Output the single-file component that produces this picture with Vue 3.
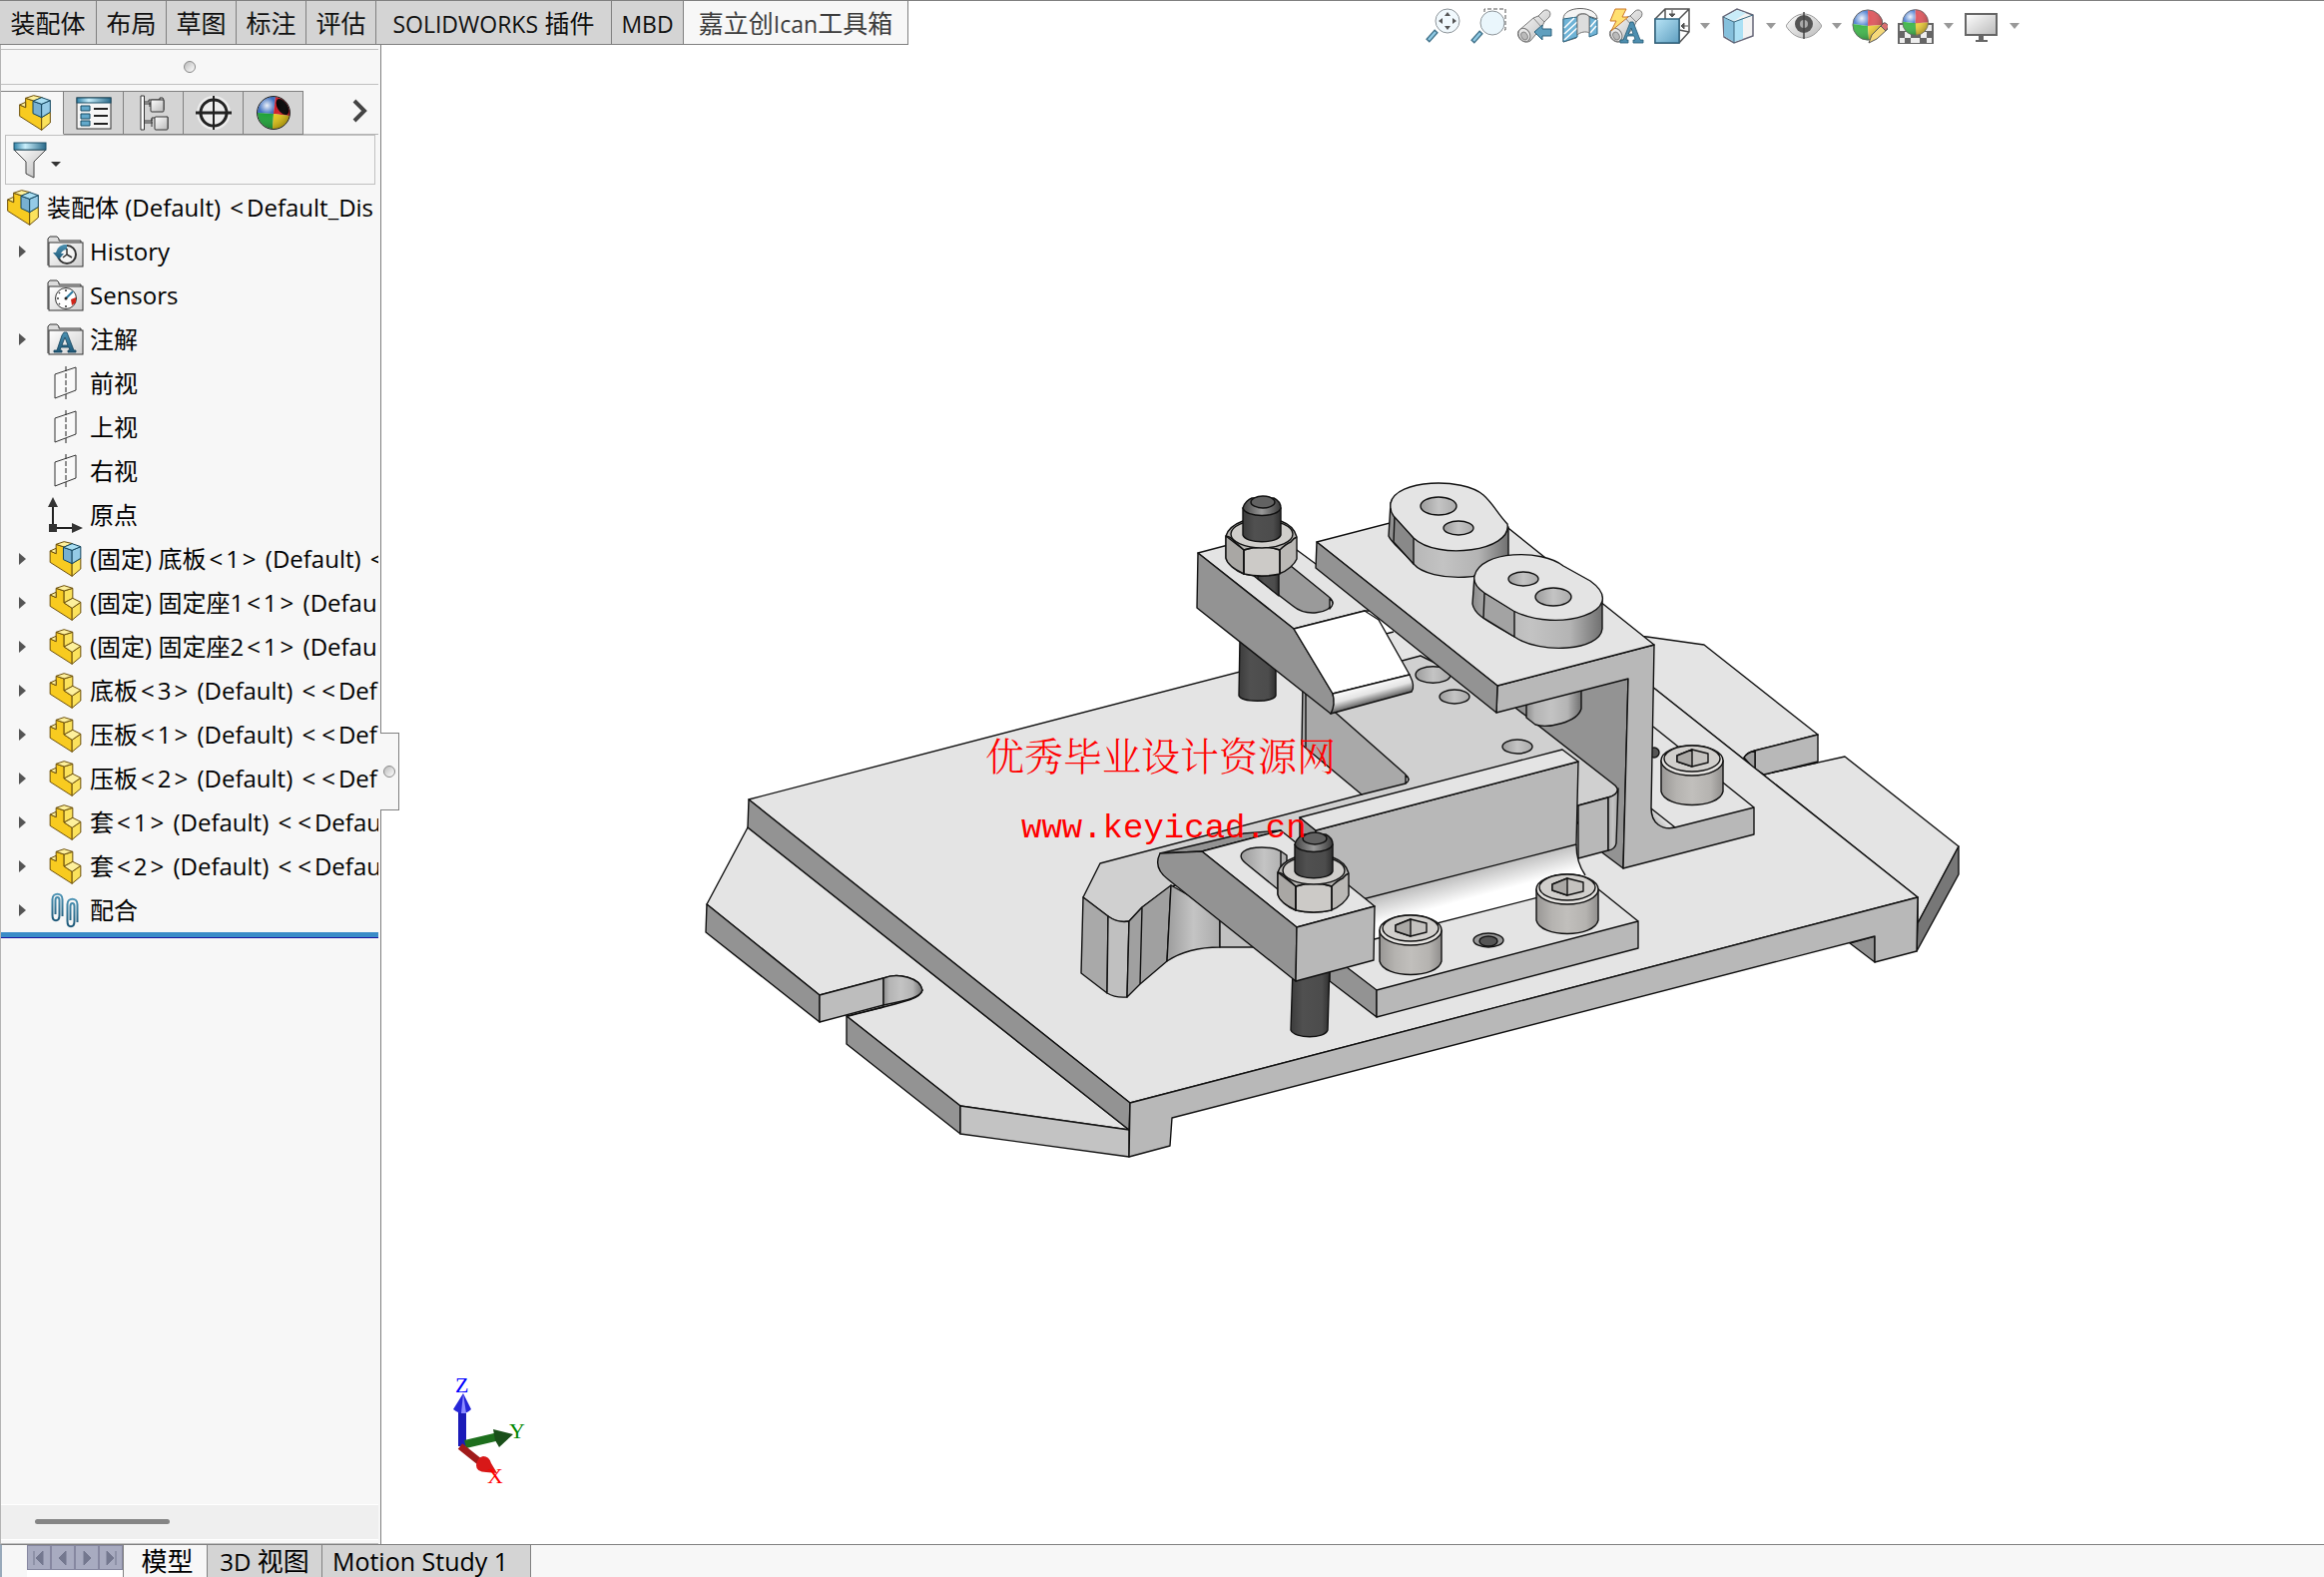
<script setup>
import { ref } from 'vue'

const commandTabs = [
  { cjk: '装配体', width: 96 },
  { cjk: '布局', width: 69 },
  { cjk: '草图', width: 69 },
  { cjk: '标注', width: 69 },
  { cjk: '评估', width: 69 },
  { latin: 'SOLIDWORKS', cjk: ' 插件', width: 235 },
  { latin: 'MBD', width: 71 },
  { lead: '嘉立创', latin: 'Ican', cjk: '工具箱', width: 224, active: true },
]

const viewTools = [
  { id: 'zoom-fit', label: 'Zoom to fit' },
  { id: 'zoom-area', label: 'Zoom to area' },
  { id: 'previous', label: 'Previous view' },
  { id: 'section', label: 'Section view' },
  { id: 'dynamic', label: 'Dynamic annotation' },
  { id: 'orient', label: 'View orientation', menu: true },
  { id: 'style', label: 'Display style', menu: true },
  { id: 'eye', label: 'Hide or show items', menu: true },
  { id: 'appearance', label: 'Edit appearance' },
  { id: 'scene', label: 'Apply scene', menu: true },
  { id: 'monitor', label: 'View settings', menu: true },
]

const panelTabs = [
  { id: 'assembly', label: 'Feature tree', active: true },
  { id: 'props', label: 'Properties' },
  { id: 'config', label: 'Configurations' },
  { id: 'target', label: 'Dimensions' },
  { id: 'ball', label: 'Display' },
]

const rootName = '装配体 (Default) <Default_Dis'

const tree = [
  { icon: 'history', text: 'History', open: true },
  { icon: 'sensor', text: 'Sensors' },
  { icon: 'note', text: '注解', open: true },
  { icon: 'plane', text: '前视' },
  { icon: 'plane', text: '上视' },
  { icon: 'plane', text: '右视' },
  { icon: 'origin', text: '原点' },
  { icon: 'assembly', text: '(固定) 底板<1> (Default) <', open: true },
  { icon: 'part', text: '(固定) 固定座1<1> (Defau', open: true },
  { icon: 'part', text: '(固定) 固定座2<1> (Defau', open: true },
  { icon: 'part', text: '底板<3> (Default) <<Def', open: true },
  { icon: 'part', text: '压板<1> (Default) <<Def', open: true },
  { icon: 'part', text: '压板<2> (Default) <<Def', open: true },
  { icon: 'part', text: '套<1> (Default) <<Defau', open: true },
  { icon: 'part', text: '套<2> (Default) <<Defau', open: true },
  { icon: 'mates', text: '配合', open: true },
]

// Angle brackets get their own span so they can carry side padding.
const pieces = (text) => text.split(/([<>])/).filter(Boolean)
const isAngle = (piece) => piece === '<' || piece === '>'

const screws = [
  [1695, 760],
  [1570, 889],
  [1413, 930],
]

const filter = ref('')
</script>

<template>
  <div class="app">
    <svg class="defs" aria-hidden="true">
      <defs>
        <linearGradient id="gBlue" x1="0" y1="0" x2="1" y2="1"><stop offset="0" stop-color="#b8e4f6" /><stop offset="1" stop-color="#5f9fc0" /></linearGradient>
        <linearGradient id="gSteel" x1="0" y1="0" x2="0" y2="1"><stop offset="0" stop-color="#4c93b4" /><stop offset="1" stop-color="#1d5878" /></linearGradient>
        <linearGradient id="gFunnel" x1="0" x2="1"><stop offset="0" stop-color="#2f82a8" /><stop offset=".35" stop-color="#c9effc" /><stop offset="1" stop-color="#2a6a8a" /></linearGradient>
        <linearGradient id="gFolder" x1="0" y1="0" x2="1" y2="1"><stop offset="0" stop-color="#fff" /><stop offset="1" stop-color="#cfcfcf" /></linearGradient>
        <radialGradient id="gShine" cx=".3" cy=".28" r=".75"><stop offset="0" stop-color="#fff" stop-opacity=".9" /><stop offset=".35" stop-color="#fff" stop-opacity="0" /><stop offset="1" stop-color="#000" stop-opacity=".25" /></radialGradient>
        <linearGradient id="gGrey" x1="0" y1="0" x2="1" y2="1"><stop offset="0" stop-color="#fff" /><stop offset="1" stop-color="#b9b9b9" /></linearGradient>

        <symbol id="i-part" viewBox="-2 -2 96 108">
          <g stroke="#6b4e08" stroke-width="3" stroke-linejoin="round">
            <path fill="#f8cb20" d="M0 28V62L66 104V68L42 52V16L18 8V36Z" />
            <path fill="#fbe25c" d="M66 68 92 50V82L66 104ZM42 16 68 8V38L42 52Z" />
            <path fill="#fdf09c" d="M18 8 42 0 68 8 42 16ZM42 52 68 38 92 50 66 68ZM0 28 18 20V36Z" />
          </g>
        </symbol>
        <symbol id="i-assembly" viewBox="-2 -2 96 108">
          <g stroke="#6b4e08" stroke-width="3" stroke-linejoin="round">
            <path fill="#f8cb20" d="M0 28V62L66 104V66L42 52V16L18 8V36Z" />
            <path fill="#fbe25c" d="M66 66 92 50V82L66 104Z" />
            <path fill="#fdf09c" d="M18 8 42 0 68 6 42 16ZM0 28 18 20V36Z" />
          </g>
          <g stroke="#12455e" stroke-width="3" stroke-linejoin="round">
            <path fill="#78b0d0" d="M40 17 66 26V66L40 54Z" />
            <path fill="#95cbe6" d="M66 26 92 15V50L66 66Z" />
            <path fill="#a9def2" d="M40 17 66 6 92 15 66 26Z" />
          </g>
        </symbol>
        <symbol id="i-props" viewBox="0 0 36 34">
          <rect x="1" y="2" width="34" height="31" fill="#f6f6f6" stroke="#333" />
          <rect x="1" y="2" width="34" height="5" fill="url(#gFunnel)" stroke="#174a63" />
          <path fill="#63a9cb" stroke="#174a63" d="M5 10H14V15H5ZM5 18H14V23H5ZM5 25H14V30H5Z" />
          <path stroke="#222" stroke-width="2" d="M18 13H32M18 20H32M18 28H32" />
        </symbol>
        <symbol id="i-config" viewBox="0 0 36 36">
          <path fill="#fff" stroke="#333" d="M5 1H8.500V35H5Z" />
          <path fill="none" stroke="#333" d="M9 7H13V5H24V3H27L28 5V15M9 9H15M9 26H16V23H28L32 22V34M9 28H17M14 7V12M16 24V32" />
          <rect x="15" y="5" width="13" height="12" rx="1" fill="url(#gGrey)" stroke="#333" />
          <rect x="19" y="22" width="13" height="13" rx="1" fill="url(#gGrey)" stroke="#333" />
        </symbol>
        <symbol id="i-target" viewBox="0 0 36 36">
          <circle cx="18" cy="18" r="17" fill="#fff" opacity=".55" />
          <circle cx="18" cy="18" r="13" fill="none" stroke="#222" stroke-width="3" />
          <path stroke="#222" stroke-width="2" d="M18 1V35" />
          <path stroke="#222" stroke-width="3" d="M0 18H36" />
        </symbol>
        <symbol id="i-ball" viewBox="0 0 36 36">
          <path fill="#3d6fc0" d="M18 19 2 18A16 16 0 0 1 20 2Z" />
          <path fill="#d01c28" d="M20 2A16 16 0 0 1 34 21L18 19Z" />
          <path fill="#1fa238" d="M2 18 18 19 17 34A16 16 0 0 1 2 18Z" />
          <path fill="#e5c818" d="M18 19 34 21A16 16 0 0 1 17 34Z" />
          <ellipse cx="27" cy="12" rx="5" ry="9" transform="rotate(-32 27 12)" fill="#000" />
          <circle cx="18" cy="18" r="16.500" fill="url(#gShine)" stroke="#222" />
        </symbol>
        <symbol id="i-folder" viewBox="0 0 37 32">
          <path fill="#dcdcdc" stroke="#333" d="M1 30V3L3 1H10L12 3V5H34V8" />
          <rect x="2" y="7" width="34" height="24" fill="url(#gFolder)" stroke="#333" />
        </symbol>
        <symbol id="i-history" viewBox="0 0 37 32">
          <use href="#i-folder" width="37" height="32" />
          <circle cx="20" cy="19" r="9" fill="#f5f5f5" stroke="#333" stroke-width="2" />
          <path fill="url(#gSteel)" d="M20 9A10 10 0 0 0 9 17H6L12 24 17 18H14A7 7 0 0 1 20 14Z" />
          <path fill="none" stroke="#333" stroke-width="1.500" d="M20 13V19L25 22M20 19 16 22" />
        </symbol>
        <symbol id="i-sensor" viewBox="0 0 37 32">
          <use href="#i-folder" width="37" height="32" />
          <circle cx="19" cy="19" r="10.500" fill="#fff" stroke="#333" />
          <path stroke="#333" stroke-width="1.500" d="M19 10V12M12 13 13 14M10 19H12M12 25 13 24M19 28V26" />
          <path stroke="#2a79a0" stroke-width="2" d="M19 19 26 12" />
          <circle cx="19" cy="19" r="1.500" fill="#222" />
          <path fill="#cf2418" d="M24 20 29 18V23L25 26Z" />
        </symbol>
        <symbol id="i-note" viewBox="0 0 37 32">
          <use href="#i-folder" width="37" height="32" />
          <path fill="url(#gSteel)" stroke="#123f58" stroke-width=".8" fill-rule="evenodd" d="M17 9H20L27 27H29V29H21V27H23L22 24H14L13 27H15V29H7V27H10L15 12ZM18 14 15 22H21Z" />
        </symbol>
        <symbol id="i-plane" viewBox="0 0 37 36">
          <path fill="#f9f9f9" stroke="#333" d="M8 9 29 2V25L8 33Z" />
          <path fill="none" stroke="#222" stroke-dasharray="5 2" d="M19 1V36" />
        </symbol>
        <symbol id="i-origin" viewBox="0 0 37 36">
          <path stroke="#222" stroke-width="2" d="M6 8V31M6 31H30" />
          <path fill="#333" d="M6 0 11 10H1ZM36 31 25 26V36ZM2 27H10V35H2Z" />
        </symbol>
        <symbol id="i-mates" viewBox="0 0 30 36">
          <g fill="none" stroke="url(#gSteel)" stroke-width="2">
            <path d="M12 24V7C12 0 2 0 2 7V23C2 30 9 30 9 23V8C9 4 5 4 5 8V22" />
            <path d="M27 30V12C27 5 17 5 17 12V29C17 36 24 36 24 29V14C24 10 20 10 20 14V28" />
          </g>
        </symbol>

        <symbol id="i-zoom-fit" viewBox="0 0 36 36">
          <path stroke="#3f7088" stroke-width="5" d="M3 33 12 23" /><path stroke="#8fc9e4" stroke-width="2.500" d="M4 32 11 24" />
          <circle cx="23" cy="13" r="12" fill="#f1f9fd" stroke="#8d9499" />
          <path fill="#555" d="M23 4 26 8H20ZM23 22 26 18H20ZM14 13 18 10V16ZM32 13 28 10V16Z" />
        </symbol>
        <symbol id="i-zoom-area" viewBox="0 0 36 36">
          <path fill="none" stroke="#555" stroke-dasharray="4 2" d="M14 10V1H35V22H28" />
          <path stroke="#3f7088" stroke-width="5" d="M2 34 11 24" /><path stroke="#8fc9e4" stroke-width="2.500" d="M3 33 10 25" />
          <circle cx="22" cy="15" r="12" fill="#eaf6fc" stroke="#8d9499" />
        </symbol>
        <symbol id="i-scope" viewBox="0 0 36 36">
          <path fill="url(#gGrey)" stroke="#777" d="M2 23 17 10 22 8 27 3C31 0 36 4 33 9L28 14 25 20 14 33C8 37 -1 30 2 23Z" />
          <path fill="none" stroke="#888" d="M17 10 25 19M22 8 28 14" />
          <ellipse cx="8" cy="27" rx="5.500" ry="7" transform="rotate(-30 8 27)" fill="#e8e8e8" stroke="#777" />
          <ellipse cx="8" cy="28" rx="3" ry="4" transform="rotate(-30 8 28)" fill="#bbb" stroke="#888" />
        </symbol>
        <symbol id="i-previous" viewBox="0 0 36 36">
          <use href="#i-scope" width="36" height="36" />
          <path fill="#5f9fbe" stroke="#2c617c" d="M18 24 26 17V21H35V28H26V32Z" />
        </symbol>
        <symbol id="i-section" viewBox="0 0 36 36">
          <path fill="#f4f4f4" stroke="#666" d="M1 11C1 -3 35 -3 35 11L26 8C26 5 15 5 15 8L14 30 1 34Z" />
          <path fill="#6fb3d6" stroke="#2e6682" d="M1 11 15 9V29L1 34ZM27 9 35 12V26L27 29Z" />
          <path stroke="#fff" stroke-width="1.500" d="M2 20 12 10M2 26 15 14M2 32 15 20M28 19 34 12M28 25 34 18" />
          <path fill="#ddd" stroke="#777" d="M15 9C17 5 25 5 27 9V25C24 23 18 24 15 27Z" />
        </symbol>
        <symbol id="i-dynamic" viewBox="0 0 36 36">
          <use href="#i-scope" width="36" height="36" />
          <path fill="#ffe070" stroke="#cc7628" d="M7 1H18L14 9H20L3 23 8 13H2Z" />
          <path fill="#4e8fb0" stroke="#245a75" stroke-width=".8" fill-rule="evenodd" d="M22 14H25L32 32H35V35H25V32H27L26 28H19L18 32H20V35H12V32H15L21 17ZM23 20 20 26H25Z" />
        </symbol>
        <symbol id="i-orient" viewBox="0 0 36 36">
          <path fill="#fff" stroke="#555" stroke-width="1.500" d="M1 11 11 1H35V24L25 35H1ZM11 1V11M25 11 35 1M25 35V11M25 22 35 24" />
          <rect x="1" y="11" width="24" height="24" fill="url(#gBlue)" stroke="#2f6480" stroke-width="1.500" />
          <path fill="#555" stroke="#555" d="M18 2V8M15 6H21L18 9ZM34 18H28M30 15V21L27 18Z" />
        </symbol>
        <symbol id="i-style" viewBox="0 0 36 36">
          <path fill="#f3f3f3" stroke="#667" stroke-width="1.500" d="M3 9 17 1 33 7V28L14 35 4 29Z" />
          <path fill="#c9ecf9" d="M4 9 17 2 26 5 14 13Z" /><path fill="#85c0dc" d="M4 10 14 14V34L4 28Z" /><path fill="#abe0f4" d="M14 14 23 10V31L14 34Z" />
          <path fill="none" stroke="#3a6980" d="M3 9 14 14 33 7M14 14V35" />
        </symbol>
        <symbol id="i-eye" viewBox="0 0 36 36">
          <path fill="url(#gGrey)" stroke="#999" d="M0 18C10 2 26 2 36 18C26 34 10 34 0 18Z" />
          <circle cx="18" cy="16" r="9" fill="#555" /><circle cx="18" cy="16" r="4" fill="#fff" opacity=".5" />
          <path stroke="#444" stroke-width="1.500" d="M18 4V31" />
        </symbol>
        <symbol id="i-rgb" viewBox="0 0 36 36">
          <path fill="#5888d4" d="M17 19 1 17A16 16 0 0 1 17 2Z" /><path fill="#e05a60" d="M17 2A16 16 0 0 1 33 18L17 19Z" />
          <path fill="#43b84e" d="M1 17 17 19 18 34A16 16 0 0 1 1 17Z" /><path fill="#f2d33f" d="M17 19 33 18A16 16 0 0 1 18 34Z" />
          <circle cx="17" cy="18" r="16" fill="url(#gShine)" stroke="#666" />
        </symbol>
        <symbol id="i-appearance" viewBox="0 0 36 36">
          <use href="#i-rgb" width="34" height="34" />
          <path fill="#f5d97a" stroke="#555" d="M17 35 20 27 31 16 36 21 25 31Z" /><path fill="#d87070" stroke="#555" d="M29 18 32 15C34 14 38 18 36 20L34 23Z" />
        </symbol>
        <symbol id="i-scene" viewBox="0 0 36 36">
          <path fill="#666" d="M0 15H36V36H0Z" /><path fill="#eee" d="M2 17H8V23H2ZM28 17H34V23H28ZM7 24H13V30H7ZM23 24H29V30H23ZM2 30H7V35H2ZM13 30H22V35H13ZM29 30H34V35H29Z" />
          <use href="#i-rgb" x="4" width="29" height="29" />
        </symbol>
        <symbol id="i-monitor" viewBox="0 0 36 36">
          <rect x="2" y="6" width="31" height="21" fill="url(#gGrey)" stroke="#666" stroke-width="2" /><path fill="#666" d="M15 28H20V32H24V34H12V32H15Z" />
        </symbol>
      </defs>
    </svg>

    <header class="ribbon">
      <nav class="tabs">
        <button v-for="(t, i) in commandTabs" :key="i" class="tab" :class="{ active: t.active }" :style="{ width: t.width + 'px' }">{{ t.lead }}<span v-if="t.latin" class="latin">{{ t.latin }}</span>{{ t.cjk }}</button>
      </nav>
      <div class="view-tools">
        <template v-for="t in viewTools" :key="t.id">
          <button class="tool" :class="{ spaced: !t.menu }" :aria-label="t.label"><svg><use :href="'#i-' + t.id" /></svg></button>
          <button v-if="t.menu" class="caret" :aria-label="t.label + ' menu'"></button>
        </template>
      </div>
    </header>

    <main class="body">
      <aside class="panel">
        <div class="grip"><i class="dot"></i></div>
        <div class="panel-tabs">
          <button v-for="t in panelTabs" :key="t.id" class="ptab" :class="{ active: t.active }" :aria-label="t.label"><svg><use :href="'#i-' + t.id" /></svg></button>
          <button class="more" aria-label="More tabs"><svg viewBox="0 0 16 26"><path d="M2 3 12 13 2 23" fill="none" stroke="#444" stroke-width="4" /></svg></button>
        </div>
        <div class="filter">
          <button class="funnel" aria-label="Filter">
            <svg viewBox="0 0 34 37"><path fill="url(#gGrey)" stroke="#444" d="M1 8 13 20V32L21 36V20L33 8Z" /><rect x="1" y="1" width="32" height="7" fill="url(#gFunnel)" stroke="#1d5068" /></svg>
            <i class="down"></i>
          </button>
          <input v-model="filter" aria-label="Filter tree" type="text">
        </div>
        <div class="tree">
          <div class="row root">
            <svg class="part-icon"><use href="#i-assembly" /></svg>
            <span class="name"><span v-for="(p, j) in pieces(rootName)" :key="j" :class="{ angle: isAngle(p) }">{{ p }}</span></span>
          </div>
          <ul>
            <li v-for="(n, i) in tree" :key="i" class="row">
              <span class="twist"><i v-if="n.open"></i></span>
              <svg class="node-icon"><use :href="'#i-' + n.icon" /></svg>
              <span class="name"><span v-for="(p, j) in pieces(n.text)" :key="j" :class="{ angle: isAngle(p) }">{{ p }}</span></span>
            </li>
          </ul>
          <div class="rollback"></div>
        </div>
        <div class="hscroll"><i></i></div>
        <div class="splitter"></div>
        <button class="handle" aria-label="Collapse panel"><i class="dot"></i></button>
      </aside>

      <section class="viewport">
        <svg class="model" viewBox="382 45 1946 1502" role="img" aria-label="Fixture assembly">
          <defs>
            <linearGradient id="cyl"><stop offset="0" stop-color="#8c8c8c" /><stop offset=".15" stop-color="#b4b4b4" /><stop offset=".45" stop-color="#c3c3c3" /><stop offset=".75" stop-color="#b4b4b4" /><stop offset="1" stop-color="#707070" /></linearGradient>
            <linearGradient id="hole"><stop offset="0" stop-color="#9c9c9c" /><stop offset=".5" stop-color="#c4c4c4" /><stop offset="1" stop-color="#ababab" /></linearGradient>
            <linearGradient id="rod"><stop offset="0" stop-color="#3c3c3c" /><stop offset=".3" stop-color="#505050" /><stop offset=".8" stop-color="#4c4c4c" /><stop offset="1" stop-color="#303030" /></linearGradient>
            <linearGradient id="shoulder"><stop offset="0" stop-color="#444" /><stop offset=".5" stop-color="#999" /><stop offset="1" stop-color="#383838" /></linearGradient>
            <linearGradient id="screw"><stop offset="0" stop-color="#999795" /><stop offset=".25" stop-color="#b5b3b0" /><stop offset=".5" stop-color="#c1bfbc" /><stop offset=".8" stop-color="#b5b3b0" /><stop offset="1" stop-color="#908e8c" /></linearGradient>
            <linearGradient id="tip" gradientUnits="userSpaceOnUse" x1="1372" y1="684" x2="1378" y2="706"><stop offset="0" stop-color="#fff" /><stop offset=".45" stop-color="#e4e4e4" /><stop offset="1" stop-color="#333" /></linearGradient>
            <linearGradient id="fillet" gradientUnits="userSpaceOnUse" x1="1474" y1="872" x2="1481" y2="898"><stop offset="0" stop-color="#bbb" /><stop offset="1" stop-color="#fff" /></linearGradient>
            <linearGradient id="fillet2" gradientUnits="userSpaceOnUse" x1="1655" y1="826" x2="1670" y2="814"><stop offset="0" stop-color="#aaa" /><stop offset="1" stop-color="#fff" /></linearGradient>
            <g id="bolt">
              <path fill="#bab8b5" d="M1228 537V559C1229 565 1238 572 1246 575C1258 578 1272 577 1281 575C1290 572 1297 565 1299 560V538C1297 530 1291 525 1283 522H1245C1237 525 1230 530 1228 537Z" />
              <path fill="#a9a7a4" d="M1228 537 1246 551V575C1238 571 1229 565 1228 559Z" /><path fill="#cccac7" d="M1246 551Q1264 545 1282 551V575Q1264 579 1246 575Z" />
              <path fill="none" d="M1228 537Q1232 537 1237 543Q1243 548 1246 551Q1264 545 1282 551Q1288 545 1293 543Q1296 539 1299 538M1246 551V575M1282 551V575" />
              <ellipse cx="1264" cy="535" rx="31" ry="14" fill="#d0cecb" />
              <path fill="url(#rod)" d="M1245 509V536C1248 545 1280 545 1283 536V509Z" />
              <path fill="url(#shoulder)" d="M1245 509C1246 504 1251 500 1254 499H1276C1280 501 1283 505 1283 509C1280 519 1248 519 1245 509Z" />
              <ellipse cx="1265" cy="503" rx="12" ry="6" fill="#626262" />
            </g>
            <g id="cap">
              <path fill="url(#screw)" d="M-31 2V33C-27 51 27 51 31 33V2Z" /><ellipse cy="2" rx="31" ry="15" fill="#e4e2df" /><ellipse rx="28" ry="13" fill="#d1cfcc" />
              <path fill="#c4c2bf" d="M-15 -3 0 -9 16 -5V4L0 8-15 3Z" /><path fill="#aaa8a5" d="M-15 -3 0 -9V8L-15 3Z" />
            </g>
          </defs>

          <g stroke="#111" stroke-width="1.400" stroke-linejoin="round">
            <!-- right end flanges -->
            <path fill="#e4e4e4" d="M1600 634 1650 638 1707 646 1821 736 1758 752Q1750 754 1747 759L1767 776 1848 758 1962 848 1921 925V899L1640 676Z" />
            <path fill="#b8b8b8" d="M1758 752 1821 736V763L1767 776 1758 770Z" /><path fill="#a0a0a0" d="M1747 759Q1750 754 1758 752V770L1755 768Z" /><path fill="none" d="M1775 774 1821 764" />
            <path fill="#777" d="M1962 848V876L1920 953 1921 925Z" />
            <!-- base plate -->
            <path fill="#e4e4e4" d="M749 829 708 906 821 997 885 980C900 974 922 980 924 992C922 1001 909 1003 848 1018L962 1108 1131 1132Z" />
            <path fill="#939393" d="M708 906 821 997V1024L707 934ZM848 1018 962 1108V1136L848 1046Z" />
            <path fill="#bdbdbd" d="M821 997 885 980V1007L821 1024Z" /><path fill="url(#cyl)" d="M885 980C900 974 922 980 924 992C922 999 911 1002 885 1007Z" /><path fill="none" d="M885 1009 850 1018" />
            <path fill="#c3c3c3" d="M962 1108 1131 1132V1159L962 1136Z" />
            <path fill="#e4e4e4" d="M750 801 1396 633 1600 644 1921 899 1132 1105Z" stroke="none" /><path fill="none" d="M1396 633 750 801 1132 1105 1921 899 1640 676" />
            <path fill="#939393" d="M750 801 1132 1105 1131 1132 749 829ZM1853 945 1878 938V964Z" />
            <path fill="#b8b8b8" d="M1132 1105 1921 899 1920 953 1878 964V938L1174 1120 1172 1148 1131 1159Z" />
            <!-- bracket inner face -->
            <path fill="#939393" d="M1510 700 1631 680 1626 870 1606 855 1560 800Z" />
            <!-- central block -->
            <path fill="#d0d0d0" d="M1308 688 1423 657 1500 695 1618 787Q1624 793 1614 798L1581 807 1173 888 1144 909 1131 923Q1118 925 1110 918L1085 899 1102 865 1364 796Z" />
            <path fill="#a9a9a9" d="M1305 685 1407 775Q1414 781 1408 785L1364 796 1304 746Z" /><path fill="none" d="M1308 690V749" /><path fill="#b8b8b8" d="M1408 777Q1414 781 1408 785Z" />
            <path fill="url(#hole)" d="M1418 676C1418 665 1453 665 1453 676C1453 687 1418 687 1418 676Z" /><ellipse cx="1457" cy="698" rx="15" ry="7" fill="url(#hole)" /><ellipse cx="1520" cy="748" rx="15" ry="7" fill="url(#hole)" />
            <path fill="#a9a9a9" d="M1085 899 1110 918 1109 995 1083 975Z" /><path fill="#c0c0c0" d="M1110 918Q1120 925 1131 923L1129 999Q1117 1000 1109 995Z" />
            <path fill="#a0a0a0" d="M1131 923 1144 909 1142 986 1129 999ZM1144 909 1173 887 1169 963 1142 986Z" />
            <path fill="url(#hole)" d="M1173 887 1222 915V949Q1190 949 1169 963Z" /><path fill="#c1c1c1" d="M1222 915 1264 949H1222Z" />
            <path fill="url(#cyl)" d="M1529 700V719L1538 726C1550 730 1580 724 1584 710V690Z" />
            <path fill="#b8b8b8" d="M1581 807 1611 799V852L1581 860Z" /><path fill="url(#cyl)" d="M1611 799Q1620 797 1621 790L1619 845Q1618 851 1611 852Z" />
            <!-- bracket foot -->
            <path fill="#e4e4e4" stroke="none" d="M1656 728 1757 809 1678 829 1653 810Z" /><path fill="none" d="M1656 728 1757 809" /><ellipse cx="1657" cy="754" rx="5" ry="5" fill="#555" />
            <path fill="url(#fillet2)" d="M1654 810 1678 829Q1655 835 1654 810Z" />
            <path fill="#b8b8b8" d="M1500 687 1657 646 1654 810C1654 825 1665 832 1678 829L1757 809V836L1626 870 1631 680 1499 714Z" />
            <!-- rear clamp -->
            <path fill="url(#rod)" d="M1242 640 1241 697C1244 704 1275 704 1278 697V660Z" />
            <path fill="#e4e4e4" d="M1200 554 1276 534 1318 565 1381 612 1367 612 1296 630Z" />
            <path fill="#9a9a9a" d="M1256 577 1295 607C1308 618 1332 615 1335 604Q1335 601 1330 597L1293 567Z" /><path fill="url(#rod)" d="M1260 570H1281V597L1260 580Z" /><path fill="#ccc" d="M1332 600Q1338 604 1332 610Z" />
            <path fill="#939393" d="M1200 554 1296 630 1335 695Q1339 710 1333 715L1199 609Z" />
            <path fill="#fff" d="M1296 630 1367 612 1381 621 1412 676 1335 695Z" /><path fill="url(#tip)" d="M1335 695 1412 676Q1418 688 1414 693L1333 715Q1338 706 1335 695Z" />
            <!-- bracket arm -->
            <path fill="#e4e4e4" d="M1319 543 1477 502 1657 646 1500 687Z" /><path fill="#939393" d="M1319 543 1500 687 1499 714 1318 569Z" />
            <path fill="url(#cyl)" d="M1393 504 1391 537C1393 543 1402 549 1416 565C1432 584 1504 584 1511 557V528Z" /><path fill="#898989" d="M1397 516 1416 539V565L1396 543Z" />
            <path fill="#e4e4e4" d="M1393 504C1398 480 1465 478 1486 496C1496 505 1499 513 1510 525C1515 552 1440 562 1416 539L1396 517Q1392 512 1393 504Z" />
            <ellipse cx="1441" cy="507" rx="18" ry="9" fill="url(#hole)" /><ellipse cx="1461" cy="529" rx="15" ry="7" fill="url(#hole)" />
            <path fill="url(#cyl)" d="M1477 577 1475 605C1477 617 1492 623 1517 638C1543 656 1603 652 1605 630V598Z" /><path fill="#a3a3a3" d="M1487 594 1517 612V638L1486 619Z" />
            <path fill="#e4e4e4" d="M1477 577C1483 551 1545 550 1566 567L1593 582C1635 612 1560 635 1516 612L1487 594Q1475 586 1477 577Z" />
            <ellipse cx="1526" cy="580" rx="15" ry="7" fill="url(#hole)" /><ellipse cx="1556" cy="598" rx="18" ry="9" fill="url(#hole)" />
            <use href="#bolt" />
            <!-- front seat -->
            <path fill="#e4e4e4" stroke="none" d="M1349 950 1595 885 1641 923 1379 992 1332 956Z" /><path fill="none" d="M1595 886 1641 923" />
            <path fill="#939393" d="M1332 956 1379 992V1019L1332 983Z" /><path fill="#b8b8b8" d="M1379 992 1641 923V950L1379 1019Z" />
            <path fill="url(#fillet)" stroke="none" d="M1365 900 1579 846Q1579 864 1588 877L1588 887 1365 944Z" /><path fill="none" d="M1365 944 1588 887M1579 846Q1579 864 1588 877" />
            <path fill="#939393" d="M1302 819 1318 832V900L1302 880Z" /><path fill="#b8b8b8" d="M1318 832 1581 763 1579 846 1318 913Z" /><path fill="#e4e4e4" d="M1302 819 1565 751 1581 763 1318 832Z" />
            <ellipse cx="1491" cy="942" rx="15" ry="7" fill="#999" /><ellipse cx="1491" cy="943" rx="9" ry="5" fill="#555" />
            <!-- front clamp -->
            <path fill="url(#rod)" d="M1295 970 1293 1032C1297 1041 1327 1041 1330 1032L1332 965Z" />
            <path fill="#939393" d="M1162 855 1246 835 1283 832 1204 853Z" />
            <path fill="#e4e4e4" d="M1204 853 1283 832 1377 908 1299 929Z" />
            <path fill="url(#hole)" d="M1280 891 1248 865C1236 855 1248 849 1264 849C1276 849 1282 851 1289 857V891Z" /><path fill="none" d="M1283 853V875" />
            <path fill="#939393" d="M1162 855 1204 853 1299 929 1298 983 1170 881C1158 872 1158 863 1162 855Z" /><path fill="#b8b8b8" d="M1299 929 1377 908 1376 962 1298 983Z" />
            <use href="#bolt" transform="translate(52 337)" />
            <use v-for="(s, i) in screws" :key="i" href="#cap" :transform="`translate(${s[0]} ${s[1]})`" />
          </g>
          <g class="mark"><text x="987" y="772" font-size="39">优秀毕业设计资源网</text><text class="url" x="1023" y="839" font-size="34">www.keyicad.cn</text></g>
        </svg>

        <svg class="triad" viewBox="440 1370 100 120" role="img" aria-label="Axes">
          <path fill="#1b1bb8" d="M459 1449V1414H467V1449Z" /><path fill="#2626d8" d="M464 1396 472 1412Q464 1420 454 1412Z" /><path fill="#8b8bff" d="M464 1396 467 1416H462Z" />
          <path stroke="#1d6f1d" stroke-width="8" d="M466 1447 500 1439" /><path fill="#194f19" d="M514 1437 494 1432 496 1443 500 1450Z" />
          <path stroke="#a01a1a" stroke-width="7" d="M461 1449 481 1465" /><path fill="#d81818" d="M484 1459Q490 1459 492 1466L498 1476 487 1475Q477 1475 477 1468 478 1460 484 1459Z" />
          <text x="456" y="1395" fill="#00f">Z</text><text x="510" y="1441" fill="#080">Y</text><text x="488" y="1486" fill="#f00">X</text>
        </svg>
      </section>
    </main>

    <footer class="bottom">
      <div class="nav">
        <button aria-label="First"><svg viewBox="0 0 22 22"><path d="M6 4V18M15 4 8 11 15 18Z" /></svg></button>
        <button aria-label="Previous"><svg viewBox="0 0 22 22"><path d="M14 4 7 11 14 18Z" /></svg></button>
        <button aria-label="Next"><svg viewBox="0 0 22 22"><path d="M8 4 15 11 8 18Z" /></svg></button>
        <button aria-label="Last"><svg viewBox="0 0 22 22"><path d="M16 4V18M7 4 14 11 7 18Z" /></svg></button>
      </div>
      <button class="btab model-tab active">模型</button>
      <button class="btab view-tab"><span class="latin">3D </span>视图</button>
      <button class="btab motion-tab">Motion Study 1</button>
    </footer>
  </div>
</template>

<style>
html, body { margin: 0; height: 100%; overflow: hidden; }
</style>

<style scoped>
.app { display: flex; flex-direction: column; height: 100vh; background: #fff; color: #000; font-family: "Open Sans", "Noto Sans CJK SC", sans-serif; font-size: 24px; }
.app * { box-sizing: border-box; }
.defs { position: absolute; width: 0; height: 0; }
button { margin: 0; padding: 0; border: 0; background: none; color: inherit; font: inherit; }
ul { margin: 0; padding: 0; list-style: none; }
svg { display: block; }

.ribbon { display: flex; flex: none; height: 45px; border-top: 1px solid #808080; }
.ribbon::after { content: ""; flex: 295 1 0; }
.tabs { display: flex; flex: 518 0 auto; }
.tabs .tab { box-sizing: content-box; height: 43px; border-right: 1px solid #808080; border-bottom: 1px solid #808080; background: #d4d4d4; color: #111; font-size: 25px; line-height: 44px; white-space: pre; }
.tabs .tab.active { background: #f7f7f7; color: #3c3c3c; }
.tab .latin { font-size: 23px; }
.view-tools { display: flex; flex: none; align-items: flex-start; padding-top: 7px; }
.tool, .tool svg { width: 36px; height: 36px; flex: none; }
.tool.spaced { margin-right: 10px; }
.caret { display: flex; flex: none; justify-content: center; align-items: center; width: 30px; height: 36px; }
.caret::before { content: ""; border: 5px solid transparent; border-top: 6px solid #999; border-bottom: 0; }

.body { display: flex; flex: 1; min-height: 0; }
.panel { position: relative; display: flex; flex: none; flex-direction: column; width: 382px; border-left: 1px solid #b4b4b4; border-right: 1px solid #808080; background: #f7f7f7; padding-right: 2px; }
.grip { display: flex; align-items: center; justify-content: center; flex: none; height: 36px; margin-top: 4px; border: solid #c0c0c0; border-width: 1px 0; }
.dot { display: block; width: 12px; height: 12px; border: 1px solid #888; border-radius: 50%; background: linear-gradient(135deg, #bbb, #fff); }
.panel-tabs { display: flex; flex: none; height: 44px; margin-top: 6px; border-bottom: 1px solid #b4b4b4; }
.ptab { display: flex; align-items: center; justify-content: center; width: 60px; height: 44px; border: solid #808080; border-width: 1px 1px 1px 0; background: #d4d4d4; }
.ptab.active { width: 63px; border-bottom-color: #f7f7f7; background: #f7f7f7; padding-left: 5px; }
.ptab svg { width: 36px; height: 36px; }
.more { margin-left: auto; margin-right: 10px; width: 16px; }
.more svg { width: 16px; height: 26px; margin-top: -3px; }
.filter { display: flex; flex: none; height: 50px; margin: 0 3px 0 4px; border: 1px solid #c0c0c0; }
.filter input { flex: 1; min-width: 0; border: 0; background: none; outline: 0; font: inherit; }
.funnel { display: flex; align-items: center; gap: 4px; padding-left: 7px; }
.funnel svg { width: 34px; height: 37px; }
.down { border: 5px solid transparent; border-top-color: #333; border-bottom: 0; margin-top: 8px; }
.tree { flex: 1; overflow: hidden; min-height: 0; }
.row { display: flex; align-items: center; height: 44px; white-space: pre; line-height: 44px; }
.root { margin-top: 1px; }
.part-icon { flex: none; width: 32px; height: 36px; margin: 0 8px 0 6px; }
.twist { flex: none; width: 46px; }
.twist i { display: block; width: 0; margin-left: 18px; border: 6px solid transparent; border-left: 7px solid #555; border-right: 0; }
.node-icon { flex: none; width: 37px; height: 36px; margin-right: 6px; }
.angle { padding: 0 3px; }
.rollback { height: 6px; border-bottom: 1px solid #1c14a0; background: #3a8cc8; }
.hscroll { flex: none; height: 35px; border-top: 1px solid #fff; background: #efefef; padding: 14px 0 0 34px; }
.hscroll i { display: block; width: 135px; height: 5px; border-radius: 3px; background: #858585; }
.splitter { flex: none; height: 5px; border-bottom: 1px solid #c0c0c0; border-top: 1px solid #fff; }
.handle { position: absolute; left: 380px; top: 689px; display: flex; align-items: center; width: 19px; height: 78px; border: 1px solid #808080; border-left: 0; background: #f7f7f7; padding-left: 3px; z-index: 1; }

.viewport { position: relative; flex: 1; min-width: 0; background: #fff; }
.model { width: 100%; height: 100%; }
.mark { fill: #f00; font-family: "Noto Serif CJK SC", "Noto Sans CJK SC", serif; font-weight: 300; }
.url { font-family: "Liberation Mono", monospace; }
.triad { position: absolute; left: 58px; bottom: 57px; width: 100px; height: 120px; font: 22px "Liberation Serif", serif; }

.bottom { display: flex; flex: none; height: 33px; border-top: 1px solid #808080; border-left: 2px solid #9ab; background: #f7f7f7; padding-left: 25px; }
.nav { display: flex; width: 97px; border-right: 1px solid #808080; background: #fff; }
.nav button { width: 24px; height: 25px; border: 1px solid #8687a0; background: #a8abc0; }
.nav svg { width: 22px; height: 22px; fill: #74788f; stroke: #74788f; }
.btab { flex: none; height: 32px; border-right: 1px solid #808080; background: #d4d4d4; font-size: 26px; line-height: 32px; white-space: pre; }
.btab.active { background: #f7f7f7; }
.btab .latin { font-size: 24px; }
.model-tab { width: 84px; padding-left: 4px; }
.view-tab { width: 115px; }
.motion-tab { width: 209px; padding-right: 12px; font-size: 25px; }
</style>
